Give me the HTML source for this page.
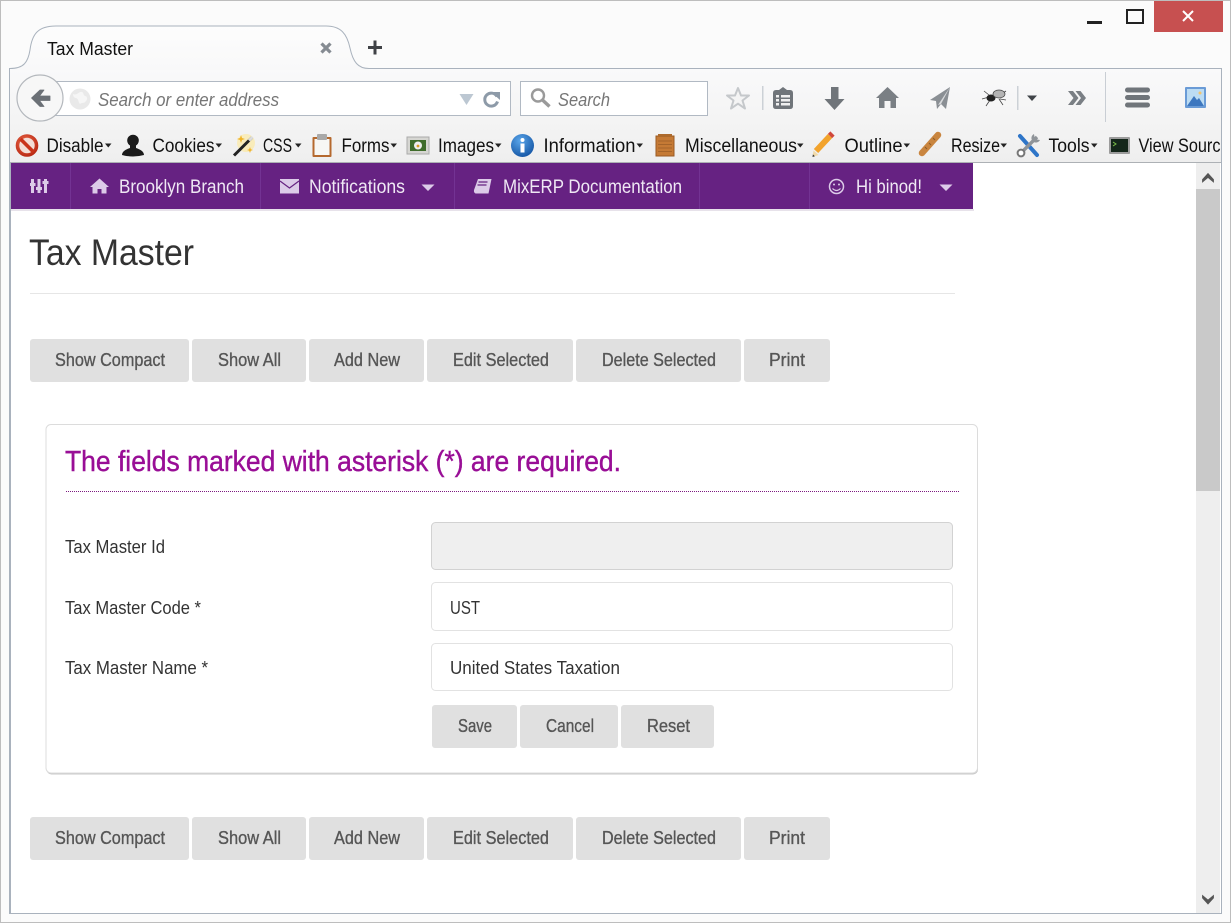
<!DOCTYPE html>
<html lang="en"><head><meta charset="utf-8"><title>Tax Master</title>
<style>
html,body{margin:0;padding:0;background:#fbfbfb;overflow:hidden}
svg{display:block}
text{font-family:"Liberation Sans",sans-serif;white-space:pre}
.tb{font-size:19px;fill:#111}
.nv{font-size:19px;fill:#efe8f4}
.bt{font-size:18.500px;fill:#565656;stroke:#565656;stroke-width:.35}
.lb{font-size:18.500px;fill:#333}
</style></head><body>
<svg xmlns="http://www.w3.org/2000/svg" width="1231" height="923" viewBox="0 0 1231 923">
<defs>
<linearGradient id="tbg" x1="0" y1="0" x2="0" y2="1"><stop offset="0" stop-color="#f9f9fa"/><stop offset=".55" stop-color="#f4f4f4"/><stop offset="1" stop-color="#eeeeee"/></linearGradient>
<linearGradient id="tabg" x1="0" y1="0" x2="0" y2="1"><stop offset="0" stop-color="#fdfdfd"/><stop offset="1" stop-color="#f8f8f9"/></linearGradient>
<radialGradient id="red" cx=".4" cy=".35" r=".8"><stop offset="0" stop-color="#ee6a4a"/><stop offset="1" stop-color="#b52410"/></radialGradient>
<radialGradient id="blue" cx=".4" cy=".3" r=".8"><stop offset="0" stop-color="#5aa6ea"/><stop offset="1" stop-color="#0f4f9f"/></radialGradient>
<clipPath id="clipT"><rect x="10" y="120" width="1211" height="42"/></clipPath>
</defs>
<!-- window -->
<rect x="0" y="0" width="1231" height="923" fill="#fbfbfb"/>
<rect x=".5" y=".5" width="1230" height="922" fill="none" stroke="#bdbdbd"/>
<!-- window controls -->
<rect x="1087" y="21" width="15" height="3" fill="#222"/>
<rect x="1127" y="10" width="16" height="13" fill="none" stroke="#222" stroke-width="2"/>
<rect x="1154" y="1" width="69" height="31" fill="#c75050"/>
<path d="M1183 11l10 10M1193 11l-10 10" stroke="#fff" stroke-width="2" fill="none"/>
<!-- toolbar -->
<rect x="10" y="69" width="1212" height="94" fill="url(#tbg)"/>
<path d="M9.500 913V68.500H1221.500V913" fill="none" stroke="#a9b2bd"/>
<!-- tab -->
<path d="M10 68.500C24 68.500 28 62 30 50C32 34 38 26 56 26H326C341 26 347 34 350 48C353 62 358 68.500 369 68.500V70H10Z" fill="url(#tabg)"/>
<path d="M10 68.500C24 68.500 28 62 30 50C32 34 38 26 56 26H326C341 26 347 34 350 48C353 62 358 68.500 369 68.500" fill="none" stroke="#a9b2bd"/>
<text x="47" y="55" font-size="18" fill="#111" textLength="86" lengthAdjust="spacingAndGlyphs">Tax Master</text>
<path d="M321.500 43.500l9 9M330.500 43.500l-9 9" stroke="#858b92" stroke-width="3.200"/>
<path d="M375 40.500v14M368 47.500h14" stroke="#3f4246" stroke-width="3"/>
<!-- url bar -->
<rect x="50.500" y="81.500" width="460" height="34" fill="#fff" stroke="#b1b9c3"/>
<circle cx="40" cy="98" r="23" fill="#f7f7f7" stroke="#b4b8bd" stroke-width="1.200"/>
<path d="M31.500 98l8.500-8h4l-4.500 6h10.500v4.500H39.500l4.500 6h-4z" fill="#6b7076" stroke="#6b7076" stroke-width=".8" stroke-linejoin="round"/>
<circle cx="80" cy="99" r="10.500" fill="#e9e9e9"/>
<path d="M73 94c4 2 6-3 9-2 2 1 1 3 3 4 2 0 3 3 1 5-2 3-4 1-6 3-2-2-1-5-4-6-2 0-3-2-3-4z" fill="#f6f6f6"/>
<text x="98" y="106" font-size="18.500" font-style="italic" fill="#767676" textLength="181" lengthAdjust="spacingAndGlyphs">Search or enter address</text>
<path d="M459.500 94h14l-7 11z" fill="#bcc7d2"/>
<path d="M497 96.500a6.500 6.500 0 1 0 .5 5" fill="none" stroke="#8d9aa8" stroke-width="3"/>
<path d="M491 92h9v8z" fill="#8d9aa8"/>
<!-- search -->
<rect x="520.500" y="81.500" width="187" height="34" fill="#fff" stroke="#b1b9c3"/>
<circle cx="538" cy="95.500" r="6" fill="none" stroke="#9a9a9a" stroke-width="2.400"/>
<path d="M542.500 100l7 6.500" stroke="#9a9a9a" stroke-width="3.400"/>
<text x="558" y="106" font-size="18.500" font-style="italic" fill="#767676" textLength="52" lengthAdjust="spacingAndGlyphs">Search</text>
<!-- toolbar icons -->
<path d="M738 88l3 7.500h8l-6.500 5 2.500 8-7-4.800-7 4.800 2.500-8-6.500-5h8z" fill="#f4f4f4" stroke="#c5c8cb" stroke-width="2" stroke-linejoin="round"/>
<rect x="762" y="86" width="1.500" height="24" fill="#ccd1d6"/>
<path d="M776 90h3l4-3 4 3h3q3 0 3 3v13q0 3-3 3h-14q-3 0-3-3V93q0-3 3-3z" fill="#70757a"/>
<path d="M776 95h3v2.500h-3zM781 95h9v2.500h-9zM776 99h3v2.500h-3zM781 99h9v2.500h-9zM776 103h3v2.500h-3zM781 103h9v2.500h-9z" fill="#f0f0f0"/>
<path d="M831 87h7.500v12h6l-10 11-10-11h6.500z" fill="#70757a"/>
<path d="M887.500 87l11.500 11h-3v10h-5.500v-7h-6v7H879V98h-3z" fill="#7a7f84"/>
<path d="M950 87l-4 22-5-5-4 5-1-8-6-1z" fill="#8a8f94"/><path d="M950 87l-12 18 3-1z" fill="#d8dadc"/>
<g stroke="#444" stroke-width=".8" fill="none"><path d="M984 91l5 4M982 99l7-2M986 106l4-6M1006 91l-6 4M1006 100l-6-1M1003 105l-4-6"/></g>
<ellipse cx="991" cy="98" rx="4.500" ry="3.500" fill="#222"/><ellipse cx="999" cy="94" rx="6" ry="4" fill="#b4b4b4" stroke="#444" stroke-width=".7"/>
<rect x="1017" y="86" width="1.500" height="24" fill="#ccd1d6"/>
<path d="M1027 95.500h10l-5 5.500z" fill="#404448"/>
<path d="M1068 91h5l5.500 7-5.500 7h-5l5.500-7zM1075.500 91h5l5.500 7-5.500 7h-5l5.500-7z" fill="#7a7f84"/>
<rect x="1105" y="72" width="1" height="50" fill="#c9ced4"/>
<rect x="1125" y="87.500" width="25" height="5" rx="2.500" fill="#70757a"/><rect x="1125" y="95" width="25" height="5" rx="2.500" fill="#70757a"/><rect x="1125" y="102.500" width="25" height="5" rx="2.500" fill="#70757a"/>
<rect x="1185" y="87" width="21" height="21" rx="1" fill="#6a9bd6"/><rect x="1187" y="89" width="17" height="17" fill="#bcdcf3"/>
<path d="M1187 106l7-10 3 4 2-2 5 8z" fill="#3d77bf"/><circle cx="1200" cy="93" r="1.500" fill="#f5c36b"/>
<!-- bookmarks -->
<g clip-path="url(#clipT)">
<text class="tb" x="46.500" y="152" textLength="57" lengthAdjust="spacingAndGlyphs">Disable</text>
<text class="tb" x="152.500" y="152" textLength="62" lengthAdjust="spacingAndGlyphs">Cookies</text>
<text class="tb" x="263" y="152" textLength="29" lengthAdjust="spacingAndGlyphs">CSS</text>
<text class="tb" x="341.500" y="152" textLength="48" lengthAdjust="spacingAndGlyphs">Forms</text>
<text class="tb" x="438" y="152" textLength="56" lengthAdjust="spacingAndGlyphs">Images</text>
<text class="tb" x="543.500" y="152" textLength="92" lengthAdjust="spacingAndGlyphs">Information</text>
<text class="tb" x="685" y="152" textLength="112" lengthAdjust="spacingAndGlyphs">Miscellaneous</text>
<text class="tb" x="844.500" y="152" textLength="58" lengthAdjust="spacingAndGlyphs">Outline</text>
<text class="tb" x="951" y="152" textLength="49" lengthAdjust="spacingAndGlyphs">Resize</text>
<text class="tb" x="1048.500" y="152" textLength="41" lengthAdjust="spacingAndGlyphs">Tools</text>
<text class="tb" x="1138.500" y="152" textLength="91" lengthAdjust="spacingAndGlyphs">View Source</text>
<path d="M105 143.500h6.500l-3.250 4zM215.500 143.500h6.500l-3.250 4zM295 143.500h6.500l-3.250 4zM390.500 143.500h6.500l-3.250 4zM495 143.500h6.500l-3.250 4zM636.500 143.500h6.500l-3.250 4zM797 143.500h6.500l-3.250 4zM903.500 143.500h6.500l-3.250 4zM1000.500 143.500h6.500l-3.250 4zM1091 143.500h6.500l-3.250 4z" fill="#222"/>
<!-- disable -->
<circle cx="27" cy="145.500" r="9.500" fill="#f3ddd6" stroke="url(#red)" stroke-width="3.600"/>
<path d="M20.500 139l13 13" stroke="#c9331a" stroke-width="3.600"/>
<!-- cookies -->
<circle cx="133" cy="140.500" r="5.800" fill="#1a1a1a"/>
<path d="M122 155c0-4 5-6 8-7v-4h6v4c3 1 8 3 8 7q-11 3-22 0z" fill="#1a1a1a"/>
<!-- css wand -->
<circle cx="246" cy="143" r="9" fill="#fbe9a8" opacity=".75"/>
<path d="M234 155.500l18-18" stroke="#222" stroke-width="3"/><path d="M249 140.500l3.500-3.500" stroke="#ddd" stroke-width="3"/>
<path d="M241 135l1 3 3 1-3 1-1 3-1-3-3-1 3-1zM250 147l.8 2.200 2.200.8-2.200.8-.8 2.200-.8-2.200-2.200-.8 2.200-.8z" fill="#f0b429"/>
<!-- forms -->
<rect x="312.500" y="137" width="19" height="20" fill="#b5692e" rx="1"/><rect x="314.500" y="139" width="15" height="16" fill="#f7f7f4"/>
<rect x="317" y="134" width="10" height="6" rx="1" fill="#a8a8a8"/>
<!-- images -->
<rect x="407" y="137" width="22" height="17" fill="#d6d6d2" stroke="#aaa"/><rect x="410" y="140" width="16" height="11" fill="#3f6c2b"/><circle cx="418" cy="145.500" r="4" fill="#eee"/><circle cx="418" cy="146" r="1.400" fill="#d99c1f"/>
<!-- info -->
<circle cx="522.500" cy="145.500" r="11.500" fill="url(#blue)"/>
<circle cx="522.500" cy="140" r="2" fill="#fff"/><rect x="520.500" y="143.500" width="4" height="9" fill="#fff"/>
<!-- misc -->
<rect x="656" y="136" width="18" height="20" fill="#c57a35" stroke="#9a5a22"/><rect x="658" y="134" width="14" height="3" fill="#ad6a2c"/>
<path d="M658 141h14M658 144.500h14M658 148h14M658 151.500h14" stroke="#a5642a"/>
<!-- outline pencil -->
<path d="M816 151l14-15" stroke="#f2a32c" stroke-width="6"/><path d="M830 136l2.500-2.500" stroke="#d0483c" stroke-width="6"/>
<path d="M812.500 157l1-6.500 5 4.500z" fill="#f0d9a9"/><path d="M812.500 157l.4-2.600 2 1.800z" fill="#333"/>
<!-- ruler -->
<path d="M922 153l16-18" stroke="#c9853f" stroke-width="6.500" stroke-linecap="round"/>
<path d="M925 147l2 2M929 143l2 2M933 138l2 2" stroke="#8c5a28"/>
<!-- tools -->
<path d="M1020 136l17 19" stroke="#2e75c8" stroke-width="4" stroke-linecap="round"/>
<path d="M1037 137l-16 16" stroke="#8f9499" stroke-width="3.400"/>
<circle cx="1021" cy="153" r="3.400" fill="#fff" stroke="#777" stroke-width="2"/>
<path d="M1034 134a4.500 4.500 0 1 0 6 6l-3-.5-2.500-2.500z" fill="#8f9499"/>
<!-- terminal -->
<rect x="1109" y="137" width="21" height="17" rx="1" fill="#9c9c9c"/><rect x="1111" y="139" width="17" height="13" fill="#14261a"/><path d="M1113 142l3 2-3 2" stroke="#7bbf4a" fill="none"/>
</g>
<!-- toolbar bottom line -->
<rect x="10" y="162" width="1211" height="1" fill="#adb1b5"/>
<!-- content -->
<rect x="10" y="163" width="1211" height="750" fill="#fff"/>
<rect x="9" y="913" width="1213" height="1" fill="#a9b2bd"/>
<rect x="9" y="163" width="2" height="750" fill="#a9b2bd"/>
<!-- scrollbar -->
<rect x="1196" y="163" width="24" height="750" fill="#eeeeee"/>
<rect x="1196" y="189" width="24" height="302" fill="#c9c9c9"/>
<path d="M1202.500 179.500l5.500-6 5.500 6v2.500l-5.500-4.500-5.500 4.500z" fill="#555" stroke="#555" stroke-width=".8"/>
<path d="M1202.500 898l5.500 6 5.500-6v-2.500l-5.500 4.500-5.500-4.500z" fill="#555" stroke="#555" stroke-width=".8"/>
<!-- nav -->
<rect x="11" y="163" width="962" height="46" fill="#662282"/>
<rect x="11" y="209" width="963" height="2" fill="#e7e2ea"/>
<path d="M70.500 163v46M260.500 163v46M454.500 163v46M699.500 163v46M809.500 163v46" stroke="#733393"/>
<!-- nav icons -->
<g fill="#dccbe8">
<path d="M31 179h3v4h1.500v3H34v7h-3v-7h-1v-3h1zM37.500 179h3v8H42v3h-1.500v3h-3v-3H36v-3h1.500zM44 179h3v2h1.500v3H47v9h-3v-9h-1.500v-3H44z"/>
<path d="M99.500 178.500l9.500 8.500h-2.500v6.500h-5V189h-4v4.500h-5V187H90z"/>
<path d="M280 179h19v14.500h-19z"/>
<path d="M478 179h13.500l-3 14.500h-13q-2-1-1.500-3.500z"/>
<path d="M421.500 184.500h13l-6.500 6.500zM939.500 184.500h13l-6.500 6.500z"/>
</g>
<path d="M280 181l9.500 7 9.500-7" fill="none" stroke="#662282" stroke-width="1.200"/>
<path d="M478.500 182h9M477.500 185h9" stroke="#662282" stroke-width="1.200"/>
<circle cx="836.500" cy="186.500" r="7" fill="none" stroke="#dccbe8" stroke-width="1.500"/>
<circle cx="834" cy="184.500" r="1" fill="#dccbe8"/><circle cx="839" cy="184.500" r="1" fill="#dccbe8"/>
<path d="M832.500 188.500q4 4 8 0" fill="none" stroke="#dccbe8" stroke-width="1.200"/>
<text class="nv" x="119" y="193" textLength="125" lengthAdjust="spacingAndGlyphs">Brooklyn Branch</text>
<text class="nv" x="309" y="193" textLength="96" lengthAdjust="spacingAndGlyphs">Notifications</text>
<text class="nv" x="503" y="193" textLength="179" lengthAdjust="spacingAndGlyphs">MixERP Documentation</text>
<text class="nv" x="856" y="193" textLength="66" lengthAdjust="spacingAndGlyphs">Hi binod!</text>
<!-- title -->
<text x="29" y="265" font-size="37" fill="#333" textLength="165" lengthAdjust="spacingAndGlyphs">Tax Master</text>
<rect x="30" y="293" width="925" height="1" fill="#e6e6e6"/>
<!-- top buttons -->
<g fill="#e0e0e0">
<rect x="30" y="339" width="159" height="43" rx="3"/><rect x="192" y="339" width="114" height="43" rx="3"/><rect x="309" y="339" width="115" height="43" rx="3"/><rect x="427" y="339" width="146" height="43" rx="3"/><rect x="576" y="339" width="165" height="43" rx="3"/><rect x="744" y="339" width="86" height="43" rx="3"/>
<rect x="30" y="817" width="159" height="43" rx="3"/><rect x="192" y="817" width="114" height="43" rx="3"/><rect x="309" y="817" width="115" height="43" rx="3"/><rect x="427" y="817" width="146" height="43" rx="3"/><rect x="576" y="817" width="165" height="43" rx="3"/><rect x="744" y="817" width="86" height="43" rx="3"/>
</g>
<text class="bt" x="55" y="366" textLength="110" lengthAdjust="spacingAndGlyphs">Show Compact</text>
<text class="bt" x="218" y="366" textLength="63" lengthAdjust="spacingAndGlyphs">Show All</text>
<text class="bt" x="334" y="366" textLength="66" lengthAdjust="spacingAndGlyphs">Add New</text>
<text class="bt" x="453" y="366" textLength="96" lengthAdjust="spacingAndGlyphs">Edit Selected</text>
<text class="bt" x="602" y="366" textLength="114" lengthAdjust="spacingAndGlyphs">Delete Selected</text>
<text class="bt" x="769" y="366" textLength="36" lengthAdjust="spacingAndGlyphs">Print</text>
<text class="bt" x="55" y="844" textLength="110" lengthAdjust="spacingAndGlyphs">Show Compact</text>
<text class="bt" x="218" y="844" textLength="63" lengthAdjust="spacingAndGlyphs">Show All</text>
<text class="bt" x="334" y="844" textLength="66" lengthAdjust="spacingAndGlyphs">Add New</text>
<text class="bt" x="453" y="844" textLength="96" lengthAdjust="spacingAndGlyphs">Edit Selected</text>
<text class="bt" x="602" y="844" textLength="114" lengthAdjust="spacingAndGlyphs">Delete Selected</text>
<text class="bt" x="769" y="844" textLength="36" lengthAdjust="spacingAndGlyphs">Print</text>
<!-- panel -->
<rect x="46.500" y="426" width="931.500" height="348.500" rx="5" fill="#c8c8c8"/>
<rect x="46" y="424.500" width="931.500" height="348.500" rx="5" fill="#fff" stroke="#dcdcdc"/>
<text x="65" y="471" font-size="28.500" fill="#990e96" stroke="#990e96" stroke-width=".4" textLength="556" lengthAdjust="spacingAndGlyphs">The fields marked with asterisk (*) are required.</text>
<path d="M66 491.500H959" stroke="#7d1a80" stroke-dasharray="1 1"/>
<text class="lb" x="65" y="553" textLength="100" lengthAdjust="spacingAndGlyphs">Tax Master Id</text>
<text class="lb" x="65" y="614" textLength="136" lengthAdjust="spacingAndGlyphs">Tax Master Code *</text>
<text class="lb" x="65" y="674" textLength="143" lengthAdjust="spacingAndGlyphs">Tax Master Name *</text>
<rect x="431.500" y="522.500" width="521" height="47" rx="4" fill="#efefef" stroke="#d2d2d2"/>
<rect x="431.500" y="582.500" width="521" height="48" rx="4" fill="#fff" stroke="#e2e2e2"/>
<rect x="431.500" y="643.500" width="521" height="47" rx="4" fill="#fff" stroke="#e2e2e2"/>
<text class="lb" x="450" y="614" textLength="30" lengthAdjust="spacingAndGlyphs">UST</text>
<text class="lb" x="450" y="674" textLength="170" lengthAdjust="spacingAndGlyphs">United States Taxation</text>
<g fill="#e0e0e0"><rect x="432" y="705" width="85" height="43" rx="3"/><rect x="520" y="705" width="98" height="43" rx="3"/><rect x="621" y="705" width="93" height="43" rx="3"/></g>
<text class="bt" x="458" y="732" textLength="34" lengthAdjust="spacingAndGlyphs">Save</text>
<text class="bt" x="546" y="732" textLength="48" lengthAdjust="spacingAndGlyphs">Cancel</text>
<text class="bt" x="647" y="732" textLength="43" lengthAdjust="spacingAndGlyphs">Reset</text>
</svg>
</body></html>
